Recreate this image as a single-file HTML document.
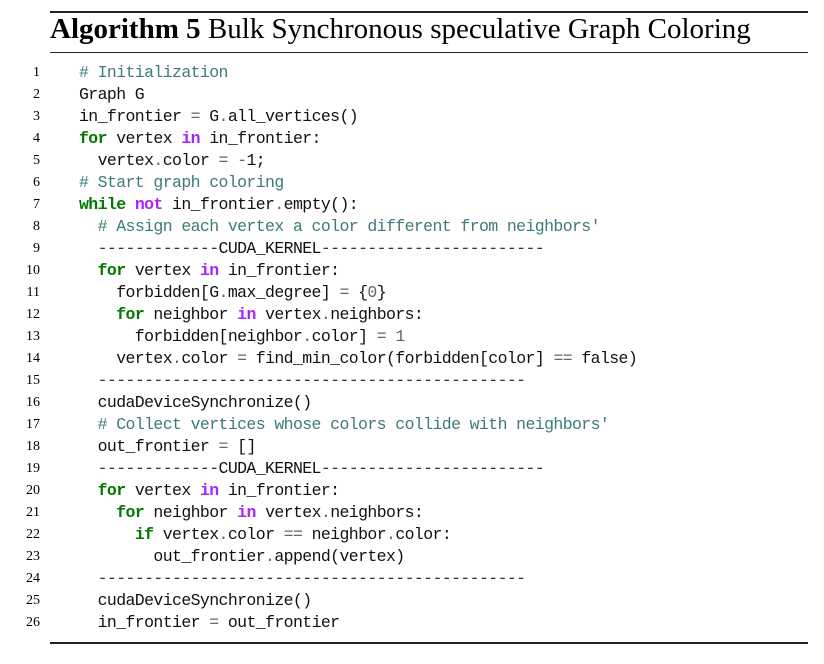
<!DOCTYPE html>
<html><head><meta charset="utf-8"><style>
body{margin:0;width:824px;height:664px;background:#fff;position:relative;overflow:hidden}
.rule{position:absolute;left:50px;width:758px;background:#222}
.title{position:absolute;left:50px;top:13px;font-family:"Liberation Serif",serif;font-size:29px;color:#000;white-space:nowrap}
.ln{position:absolute;left:0;width:40px;text-align:right;font-family:"Liberation Serif",serif;font-size:14px;height:22px;line-height:22px;color:#000}
.c{position:absolute;left:79px;font-family:"Liberation Mono",monospace;font-size:16.5px;letter-spacing:-0.6px;height:22px;line-height:22px;white-space:pre;color:#111}
.cm{color:#3d7a7a}
.k{color:#007a00;font-weight:bold}
.p{color:#aa22ff;font-weight:bold}
.o{color:#666}
.d{color:#333}
</style></head><body>
<div class="rule" style="top:11px;height:2px"></div>
<div class="title"><b>Algorithm 5</b> Bulk Synchronous speculative Graph Coloring</div>
<div class="rule" style="top:52px;height:1px"></div>
<div class="rule" style="top:642px;height:1.5px"></div>

<div class="ln" style="top:62px">1</div><div class="c" style="top:62px"><span class="cm"># Initialization</span></div>
<div class="ln" style="top:84px">2</div><div class="c" style="top:84px">Graph G</div>
<div class="ln" style="top:106px">3</div><div class="c" style="top:106px">in_frontier <span class="o">=</span> G<span class="o">.</span>all_vertices()</div>
<div class="ln" style="top:128px">4</div><div class="c" style="top:128px"><span class="k">for</span> vertex <span class="p">in</span> in_frontier:</div>
<div class="ln" style="top:150px">5</div><div class="c" style="top:150px">  vertex<span class="o">.</span>color <span class="o">=</span> <span class="o">-</span>1;</div>
<div class="ln" style="top:172px">6</div><div class="c" style="top:172px"><span class="cm"># Start graph coloring</span></div>
<div class="ln" style="top:194px">7</div><div class="c" style="top:194px"><span class="k">while</span> <span class="p">not</span> in_frontier<span class="o">.</span>empty():</div>
<div class="ln" style="top:216px">8</div><div class="c" style="top:216px">  <span class="cm"># Assign each vertex a color different from neighbors'</span></div>
<div class="ln" style="top:238px">9</div><div class="c" style="top:238px">  <span class="d">-------------</span>CUDA_KERNEL<span class="d">------------------------</span></div>
<div class="ln" style="top:260px">10</div><div class="c" style="top:260px">  <span class="k">for</span> vertex <span class="p">in</span> in_frontier:</div>
<div class="ln" style="top:282px">11</div><div class="c" style="top:282px">    forbidden[G<span class="o">.</span>max_degree] <span class="o">=</span> {<span class="o">0</span>}</div>
<div class="ln" style="top:304px">12</div><div class="c" style="top:304px">    <span class="k">for</span> neighbor <span class="p">in</span> vertex<span class="o">.</span>neighbors:</div>
<div class="ln" style="top:326px">13</div><div class="c" style="top:326px">      forbidden[neighbor<span class="o">.</span>color] <span class="o">=</span> <span class="o">1</span></div>
<div class="ln" style="top:348px">14</div><div class="c" style="top:348px">    vertex<span class="o">.</span>color <span class="o">=</span> find_min_color(forbidden[color] <span class="o">==</span> false)</div>
<div class="ln" style="top:370px">15</div><div class="c" style="top:370px">  <span class="d">----------------------------------------------</span></div>
<div class="ln" style="top:392px">16</div><div class="c" style="top:392px">  cudaDeviceSynchronize()</div>
<div class="ln" style="top:414px">17</div><div class="c" style="top:414px">  <span class="cm"># Collect vertices whose colors collide with neighbors'</span></div>
<div class="ln" style="top:436px">18</div><div class="c" style="top:436px">  out_frontier <span class="o">=</span> []</div>
<div class="ln" style="top:458px">19</div><div class="c" style="top:458px">  <span class="d">-------------</span>CUDA_KERNEL<span class="d">------------------------</span></div>
<div class="ln" style="top:480px">20</div><div class="c" style="top:480px">  <span class="k">for</span> vertex <span class="p">in</span> in_frontier:</div>
<div class="ln" style="top:502px">21</div><div class="c" style="top:502px">    <span class="k">for</span> neighbor <span class="p">in</span> vertex<span class="o">.</span>neighbors:</div>
<div class="ln" style="top:524px">22</div><div class="c" style="top:524px">      <span class="k">if</span> vertex<span class="o">.</span>color <span class="o">==</span> neighbor<span class="o">.</span>color:</div>
<div class="ln" style="top:546px">23</div><div class="c" style="top:546px">        out_frontier<span class="o">.</span>append(vertex)</div>
<div class="ln" style="top:568px">24</div><div class="c" style="top:568px">  <span class="d">----------------------------------------------</span></div>
<div class="ln" style="top:590px">25</div><div class="c" style="top:590px">  cudaDeviceSynchronize()</div>
<div class="ln" style="top:612px">26</div><div class="c" style="top:612px">  in_frontier <span class="o">=</span> out_frontier</div>
</body></html>
